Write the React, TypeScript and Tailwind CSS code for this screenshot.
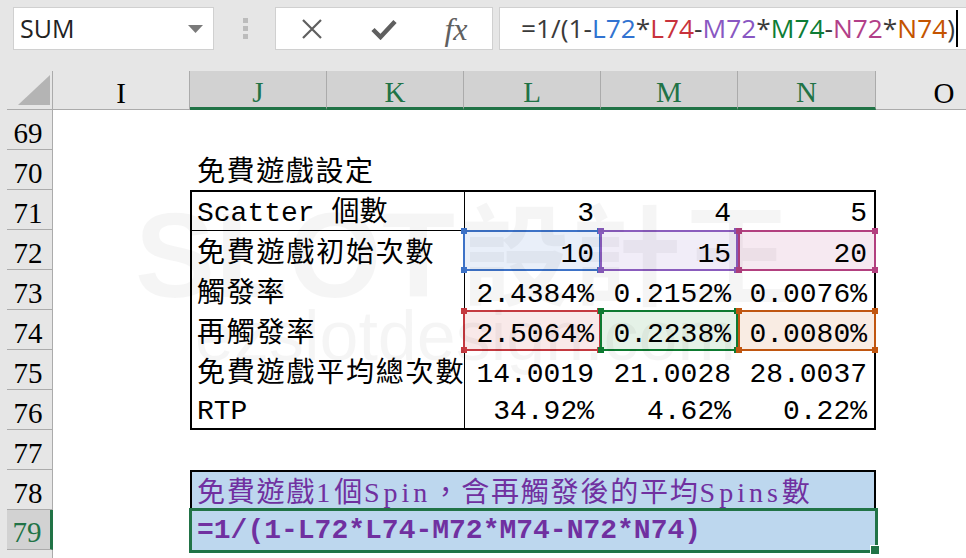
import clsx from "clsx";

const CELL_FONT = "font-['Liberation_Mono','Noto_Sans_CJK_TC',monospace]";
const HEAD_FONT = "font-['Liberation_Serif','Noto_Sans_CJK_TC',serif]";
const UI_FONT = "font-['Open_Sans','Noto_Sans',sans-serif]";

const formulaParts: { text: string; color: string }[] = [
  { text: "=1/(1-", color: "text-[#3a3a3a]" },
  { text: "L72", color: "text-[#3173d1]" },
  { text: "*", color: "text-[#3a3a3a]" },
  { text: "L74", color: "text-[#c8323c]" },
  { text: "-", color: "text-[#3a3a3a]" },
  { text: "M72", color: "text-[#8957c2]" },
  { text: "*", color: "text-[#3a3a3a]" },
  { text: "M74", color: "text-[#0d7d35]" },
  { text: "-", color: "text-[#3a3a3a]" },
  { text: "N72", color: "text-[#b23f88]" },
  { text: "*", color: "text-[#3a3a3a]" },
  { text: "N74", color: "text-[#c45400]" },
  { text: ")", color: "text-[#3a3a3a]" },
];

function TopBar() {
  return (
    <div className={`h-[71px] bg-[#e6e6e6] flex items-start pt-[7px] pl-[13px] ${UI_FONT}`}>
      <div className="w-[201px] h-[43px] shrink-0 bg-white border border-[#d0d0d0] flex items-center justify-between pl-[6px] pr-[10px]">
        <span className="text-[25px] leading-none text-[#222]">SUM</span>
        <svg width="15" height="8" viewBox="0 0 15 8">
          <path d="M0 0H15L7.5 8Z" fill="#7a7a7a" />
        </svg>
      </div>
      <div className="w-[61px] h-[43px] shrink-0 flex flex-col items-center justify-center gap-[3px] pl-[2px]">
        <div className="w-[5px] h-[5px] bg-[#bcbcbc]" />
        <div className="w-[5px] h-[5px] bg-[#bcbcbc]" />
        <div className="w-[5px] h-[5px] bg-[#bcbcbc]" />
      </div>
      <div className="w-[218px] h-[43px] shrink-0 bg-white border border-[#d0d0d0] flex items-center">
        <div className="w-[72px] flex justify-center">
          <svg width="22" height="20" viewBox="0 0 22 20">
            <path d="M2 1L20 19M20 1L2 19" stroke="#5f5f5f" strokeWidth="2.2" />
          </svg>
        </div>
        <div className="w-[72px] flex justify-center">
          <svg width="26" height="22" viewBox="0 0 26 22">
            <path d="M2 11.5L9.5 19L24 3.5" stroke="#5f5f5f" strokeWidth="4.5" fill="none" />
          </svg>
        </div>
        <div className="w-[72px] flex justify-center">
          <span className="font-['Liberation_Serif',serif] italic text-[32px] leading-none text-[#606060]">fx</span>
        </div>
      </div>
      <div className="ml-[6px] flex-1 h-[43px] bg-white border border-[#d0d0d0] border-r-0 flex items-center pl-[21px]">
        <span className="text-[26.3px] leading-none whitespace-nowrap">
          {formulaParts.map((p, i) => (
            <span key={i} className={p.color}>
              {p.text}
            </span>
          ))}
        </span>
        <div className="ml-[1px] w-[2px] h-[37px] bg-black" />
      </div>
    </div>
  );
}

const cols = [
  { label: "I", w: "w-[137px]", sel: false },
  { label: "J", w: "w-[137px]", sel: true },
  { label: "K", w: "w-[137px]", sel: true },
  { label: "L", w: "w-[137px]", sel: true },
  { label: "M", w: "w-[137px]", sel: true },
  { label: "N", w: "w-[138px]", sel: true },
  { label: "O", w: "w-[137px]", sel: false },
];

function ColumnHeaders() {
  return (
    <div className={`flex h-[39px] bg-[#e6e6e6] ${HEAD_FONT}`}>
      <div className="w-[7px] shrink-0" />
      <div className="w-[46px] shrink-0 border-r border-b border-[#ababab] flex items-end justify-end pr-[2px] pb-[4px]">
        <svg width="32" height="30" viewBox="0 0 32 30">
          <path d="M32 0V30H0Z" fill="#b4b4b4" />
        </svg>
      </div>
      {cols.map((c) => (
        <div
          key={c.label}
          className={clsx(
            "shrink-0 flex items-end justify-center text-[29px] leading-[29px] border-r border-r-[#ababab]",
            c.w,
            c.sel
              ? "bg-[#d2d2d2] text-[#217346] border-b-[3px] border-b-[#217346]"
              : "border-b border-b-[#ababab] pb-[1px]"
          )}
        >
          {c.label}
        </div>
      ))}
    </div>
  );
}

// row 80 only shows a sliver of its header at the bottom edge
const rowNums = [69, 70, 71, 72, 73, 74, 75, 76, 77, 78, 79, 80];

function RowHeaders() {
  return (
    <div className={`w-[46px] shrink-0 flex flex-col bg-[#e6e6e6] ${HEAD_FONT}`}>
      {rowNums.map((n) => (
        <div
          key={n}
          className={clsx(
            "h-[40px] shrink-0 flex items-end justify-center pr-[3px] text-[29px] leading-[29px] border-b border-b-[#ababab]",
            n === 79
              ? "bg-[#d2d2d2] text-[#217346] border-r-[3px] border-r-[#217346] pb-[2px]"
              : "border-r border-r-[#ababab] pb-[1px]"
          )}
        >
          {n < 80 ? n : null}
        </div>
      ))}
    </div>
  );
}

type Hi = { frame: string; dot: string; inset: string };

const hi: Record<string, Hi> = {
  L72: { frame: "border-[#3d72c7] bg-[#e9eff9]", dot: "bg-[#3d72c7]", inset: "-left-[2px] -top-[1px] right-0 bottom-0" },
  M72: { frame: "border-[#8a5cbd] bg-[#f1edf8]", dot: "bg-[#8a5cbd]", inset: "-left-[1px] -top-[1px] right-0 bottom-0" },
  N72: { frame: "border-[#b2407f] bg-[#f6e9f1]", dot: "bg-[#b2407f]", inset: "left-0 -top-[1px] -right-[2px] bottom-0" },
  L74: { frame: "border-[#c4393f] bg-[#f9e9e9]", dot: "bg-[#c4393f]", inset: "-left-[2px] -top-[1px] right-0 bottom-0" },
  M74: { frame: "border-[#0d7a30] bg-[#e5f2e7]", dot: "bg-[#0d7a30]", inset: "-left-[1px] -top-[1px] right-0 bottom-0" },
  N74: { frame: "border-[#c05610] bg-[#f9ece3]", dot: "bg-[#c05610]", inset: "left-0 -top-[1px] -right-[2px] bottom-0" },
};

function Highlight({ h }: { h: Hi }) {
  return (
    <div className={clsx("absolute border-2", h.frame, h.inset)}>
      <div className={clsx("absolute -left-[4px] -top-[4px] w-[6px] h-[6px]", h.dot)} />
      <div className={clsx("absolute -right-[4px] -top-[4px] w-[6px] h-[6px]", h.dot)} />
      <div className={clsx("absolute -left-[4px] -bottom-[4px] w-[6px] h-[6px]", h.dot)} />
      <div className={clsx("absolute -right-[4px] -bottom-[4px] w-[6px] h-[6px]", h.dot)} />
    </div>
  );
}

const tableRows: { label: string; cjk: boolean; h: string; vals: string[]; marks?: Hi[] }[] = [
  { label: "Scatter 個數", cjk: false, h: "h-[39px] border-b border-black", vals: ["3", "4", "5"] },
  { label: "免費遊戲初始次數", cjk: true, h: "h-[40px]", vals: ["10", "15", "20"], marks: [hi.L72, hi.M72, hi.N72] },
  { label: "觸發率", cjk: true, h: "h-[40px]", vals: ["2.4384%", "0.2152%", "0.0076%"] },
  { label: "再觸發率", cjk: true, h: "h-[40px]", vals: ["2.5064%", "0.2238%", "0.0080%"], marks: [hi.L74, hi.M74, hi.N74] },
  { label: "免費遊戲平均總次數", cjk: true, h: "h-[40px]", vals: ["14.0019", "21.0028", "28.0037"] },
  { label: "RTP", cjk: false, h: "h-[37px]", vals: ["34.92%", "4.62%", "0.22%"] },
];

function Watermark() {
  return (
    <div className="pointer-events-none absolute inset-0 text-black/[0.04]">
      <div className="absolute left-[82px] top-[84px] flex items-baseline leading-none whitespace-nowrap">
        <span className="font-['Liberation_Sans',sans-serif] font-bold text-[120px]">SLOT</span>
        <span className="font-['Noto_Sans_CJK_TC',sans-serif] font-bold text-[110px] ml-[6px]">設計王</span>
      </div>
      <div className="absolute left-[142px] top-[191px] font-['Liberation_Sans',sans-serif] text-[70px] leading-none whitespace-nowrap">
        ezslotdesign.com
      </div>
    </div>
  );
}

function Sheet() {
  return (
    <div className={`relative flex-1 bg-white text-black ${CELL_FONT} text-[28px] leading-[28px]`}>
      <div className="h-[40px]" />
      <div className="h-[40px] flex items-end pl-[144px] pb-[2px] tracking-[1.6px] whitespace-nowrap">免費遊戲設定</div>

      <div className="ml-[137px] w-[686px] h-[240px] border-2 border-black flex flex-col">
        {tableRows.map((r) => (
          <div key={r.label} className={clsx("grid grid-cols-[273px_136px_137px_136px] shrink-0", r.h)}>
            <div
              className={clsx(
                "border-r border-black flex items-end pl-[5px] pb-[2px] whitespace-nowrap",
                r.cjk && "tracking-[1.8px]"
              )}
            >
              {r.label}
            </div>
            {r.vals.map((v, i) => (
              <div key={i} className="relative flex items-end justify-end pr-[7px] pb-[2px] whitespace-nowrap">
                {r.marks && <Highlight h={r.marks[i]} />}
                <span className="relative">{v}</span>
              </div>
            ))}
          </div>
        ))}
      </div>

      <div className="h-[40px]" />

      <div className="ml-[137px] w-[686px]">
        <div className="h-[40px] bg-[#bdd7ee] border-t-2 border-x-2 border-black flex items-end pl-[5px] pb-[3px] text-[#7030a0] font-['Liberation_Serif','Noto_Sans_CJK_TC',serif] tracking-[1.8px] whitespace-nowrap">
          免費遊戲<span className="tracking-[4px]">1</span>個<span className="tracking-[4px]">Spin</span>，含再觸發後的平均<span className="tracking-[4px]">Spins</span>數
        </div>
        <div className="relative h-[40px] bg-[#bdd7ee] flex items-end pl-[7px] pb-[5px] font-bold text-[#7030a0] whitespace-nowrap">
          <div className="absolute -left-[1px] -right-[2px] -top-[2px] -bottom-[3px] border-[3px] border-[#217346]" />
          <div className="absolute -right-[4px] -bottom-[5px] w-[10px] h-[10px] bg-[#217346] border border-white" />
          <span className="relative">=1/(1-L72*L74-M72*M74-N72*N74)</span>
        </div>
      </div>

      <Watermark />
    </div>
  );
}

export default function App() {
  return (
    <div className="w-[966px] h-[558px] overflow-hidden bg-white">
      <TopBar />
      <ColumnHeaders />
      <div className="flex h-[448px] overflow-hidden">
        <div className="w-[7px] shrink-0 bg-[#e6e6e6]" />
        <RowHeaders />
        <Sheet />
      </div>
    </div>
  );
}
